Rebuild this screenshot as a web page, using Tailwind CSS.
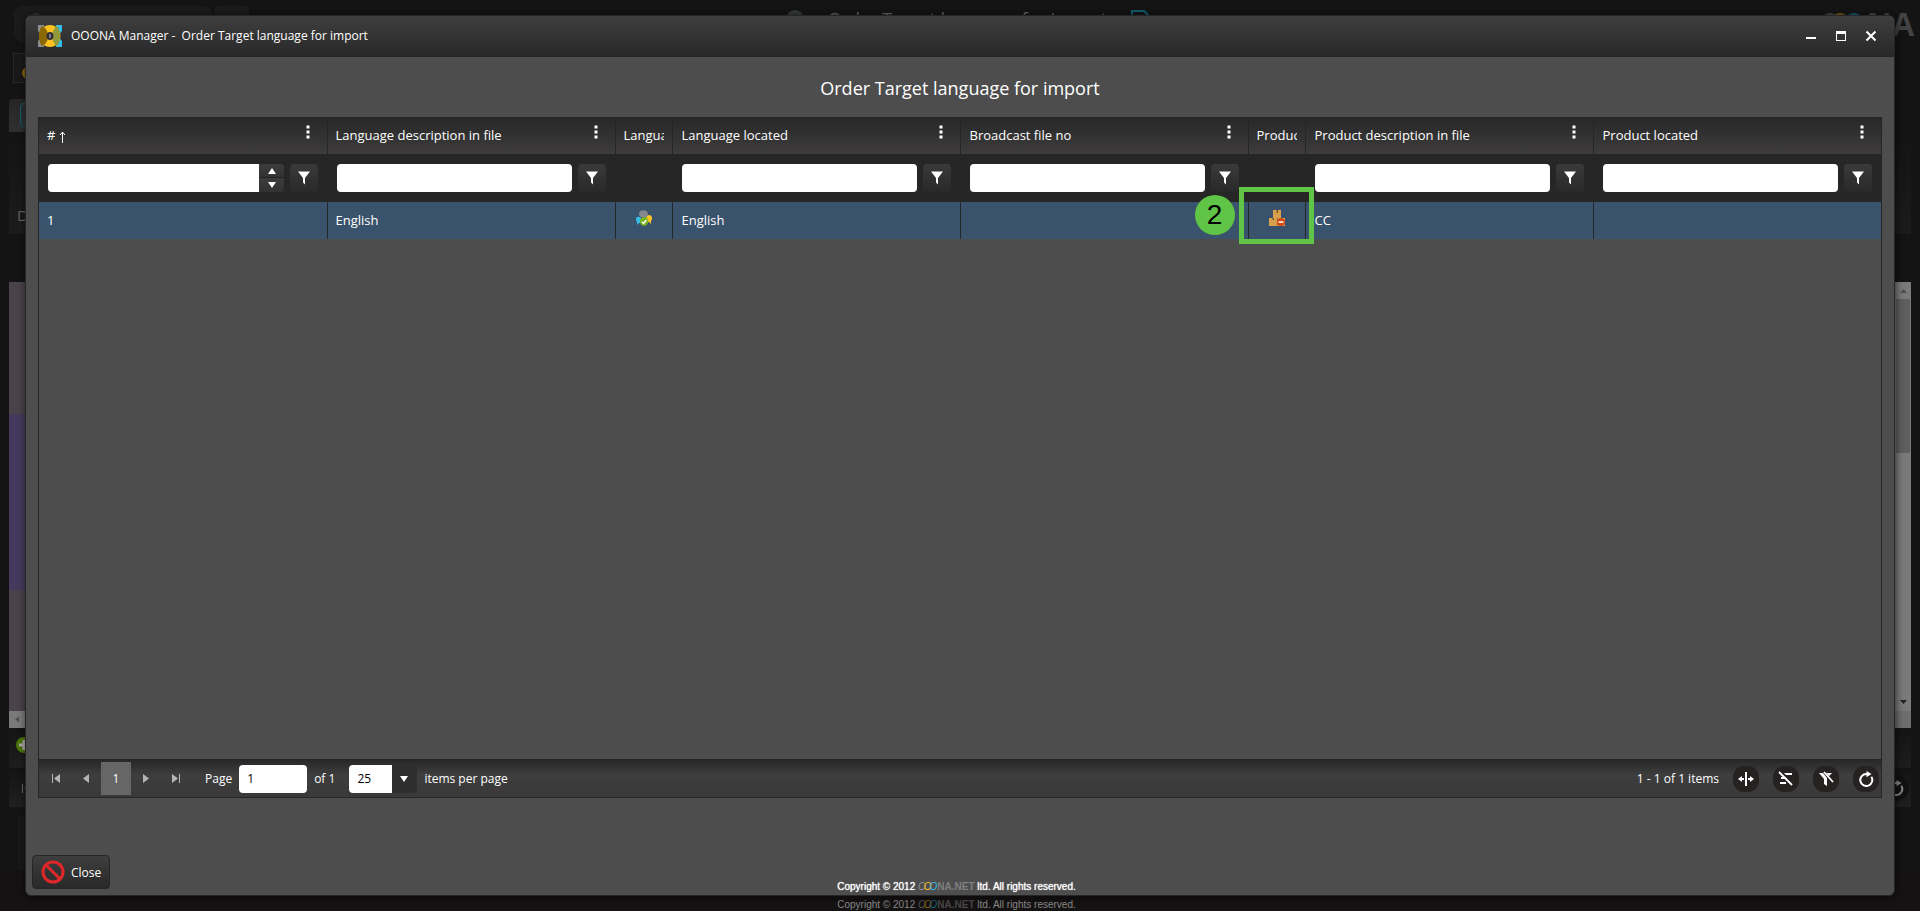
<!DOCTYPE html>
<html lang="en">
<head>
<meta charset="utf-8">
<title>OOONA Manager</title>
<script src="https://cdn.jsdelivr.net/npm/@tailwindcss/browser@4"></script>
</head>
<body class="relative h-screen overflow-hidden bg-[#141414] font-['Open_Sans','Noto_Sans',sans-serif] text-[13px] text-white">

<svg class="hidden" aria-hidden="true">
  <symbol id="funnel" viewBox="0 0 12 14"><path fill="currentColor" d="M0 0.500h12L7 7v6.500L5 11.500V7z"/></symbol>
  <symbol id="dots" viewBox="0 0 4 14"><path fill="currentColor" d="M0.500 0.500h3v3h-3zM0.500 5.500h3v3h-3zM0.500 10.500h3v3h-3z"/></symbol>
  <symbol id="first" viewBox="0 0 8 9"><path fill="currentColor" d="M0 0h1v9H0zM8 0v9L2 4.500z"/></symbol>
  <symbol id="prev" viewBox="0 0 6 9"><path fill="currentColor" d="M6 0v9L0 4.500z"/></symbol>
  <symbol id="refresh" viewBox="0 0 16 16"><path fill="none" stroke="currentColor" stroke-width="2" d="M10 3H8.500a6 6 0 1 0 4.800 2.700"/><path fill="currentColor" d="M8.500 0l5 3-5 3.300z"/></symbol>
</svg>

<!-- Dimmed page behind the window -->
<div class="flex h-full flex-col" aria-hidden="true">
  <div class="flex h-[53px] items-start justify-between pt-[6px] pr-[5px] pl-[14px]">
    <div class="flex w-[264px] gap-[2px]">
      <div class="h-9 w-[198px] rounded-lg bg-[#1b1b1b] pt-[7px] pl-4"><div class="size-3 rounded-full border-2 border-[#333]"></div></div>
      <div class="h-9 w-[35px] rounded-sm bg-[#1b1b1b]"></div>
    </div>
    <div class="flex items-start gap-6 text-[#666]">
      <div class="mt-1 size-[18px] rounded-full bg-[#333838]"></div>
      <div class="text-lg leading-[26px]">Order Target language for import</div>
      <svg class="mt-1 h-5 w-5" viewBox="0 0 20 20" fill="none" stroke="#12596a" stroke-width="2"><path d="M1 19V1h12l6 6v12z"/><path stroke="#4a3c10" d="M5 6h6"/></svg>
    </div>
    <div class="flex w-[256px] justify-end gap-[2px] pt-[3px] font-['Liberation_Sans',sans-serif] text-[33px] leading-8 font-bold text-[#434343]">
      <svg class="mt-1 h-6 w-[46px]" viewBox="0 0 46 24" fill="none" stroke-width="5"><ellipse cx="11" cy="12" rx="8" ry="9.500" stroke="#434343"/><ellipse cx="21" cy="12" rx="8" ry="9.500" stroke="#6f5714"/><ellipse cx="35" cy="12" rx="8" ry="9.500" stroke="#12596a"/></svg>
      <span>NA</span>
    </div>
  </div>
  <div class="flex h-[46px] pl-[13px]">
    <div class="h-[30px] w-20 border border-[#262626] bg-[#191919] pt-[13px] pl-2"><div class="size-3 rounded-full bg-[#86650b]"></div></div>
  </div>
  <div class="ml-[9px] h-[33px] w-24 rounded-t-sm bg-linear-to-b from-[#262626] to-[#303030] pt-1 pl-[11px]"><div class="h-6 w-8 rounded-sm border border-[#12596a] bg-[#2a3033]"></div></div>
  <div class="mx-[9px] h-[102px] bg-linear-to-b from-[#151314] to-[#1c1c1c] pt-[72px] pl-2 text-[15px] text-[#666]">D</div>
  <div class="h-12"></div>
  <div class="mx-[9px] flex h-[446px]">
    <div class="flex w-8 flex-col">
      <div class="h-[132px] bg-[#4a4349]"></div>
      <div class="h-[176px] bg-[#453a5e]"></div>
      <div class="grow bg-[#4a4349]"></div>
      <div class="flex h-[17px] items-center bg-[#7a7a7a] pl-[6px] text-[#4d4d4d]"><svg class="h-[7px] w-1"><use href="#prev"/></svg></div>
    </div>
    <div class="grow"></div>
    <div class="flex w-4 flex-col items-center bg-[#7a7a7a]">
      <div class="flex h-[17px] w-full items-center justify-center"><svg class="h-1 w-[7px]" viewBox="0 0 7 4"><path fill="#4d4d4d" d="M0 4L3.500 0 7 4z"/></svg></div>
      <div class="h-[154px] w-[14px] bg-[#5f5f5f]"></div>
      <div class="flex grow items-end pb-[7px]"><svg class="h-1 w-[7px]" viewBox="0 0 7 4"><path fill="#222" d="M0 0h7L3.500 4z"/></svg></div>
      <div class="h-[17px] w-full bg-[#6e6e6e]"></div>
    </div>
  </div>
  <div class="mx-[9px] h-10 bg-linear-to-b from-[#141414] to-[#1e1e1e] pt-[9px] pl-[7px]">
    <svg class="size-4" viewBox="0 0 16 16"><circle cx="8" cy="8" r="8" fill="#4c7407"/><path stroke="#aaa" stroke-width="3" d="M3 8h10M8 3v10"/></svg>
  </div>
  <div class="mx-[9px] mt-px flex h-[38px] items-center justify-between bg-linear-to-b from-[#141414] to-[#202020] pr-[2px] pl-[13px] text-[#666]">
    <svg class="h-[9px] w-2"><use href="#first"/></svg>
    <span class="flex size-[26px] items-center justify-center rounded-full bg-[#131111] text-[#888]"><svg class="size-4"><use href="#refresh"/></svg></span>
  </div>
  <div class="mt-[10px] ml-[18px] h-[52px] w-24 border border-[#1c1c1c] bg-[#171717]"></div>
  <div class="flex grow items-end justify-center bg-[#151213] pr-[7px] font-['Liberation_Sans',sans-serif] text-[10px] leading-3 text-[#8a8a8a]"><span class="whitespace-pre">Copyright © 2012 <i class="text-[#555]">O</i><i class="-ml-[2px] text-[#86650b]">O</i><i class="-ml-[2px] text-[#17667a]">O</i><b class="text-[#484848]">NA.NET</b> ltd. All rights reserved.</span></div>
</div>

<!-- Window -->
<div role="dialog" aria-labelledby="window-title" class="absolute inset-x-[25px] top-[15px] bottom-[15px] flex flex-col rounded-md border border-[#262626] bg-[#4d4d4d] shadow-[1px_1px_7px_1px_rgba(0,0,0,0.5)]">
  <header class="flex h-[41px] shrink-0 items-center justify-between rounded-t-md border-b border-[#262626] bg-linear-to-b from-[#3e3e3e] to-[#292929] pr-2 pl-3">
    <div class="flex items-center gap-[9px]">
      <svg class="h-[22px] w-6" viewBox="0 0 24 22">
        <path fill="#8d8d92" d="M0 0h6v22H0v-6c3-2 3-8 0-10z"/>
        <path fill="#35bde5" d="M24 0h-6v22h6v-6c-3-2-3-8 0-10z"/>
        <ellipse cx="12" cy="11" rx="10.500" ry="11" fill="#fcc222"/>
        <path fill="#8b6905" d="M4 1c8 3 8 17 0 20C0 17 0 5 4 1z"/>
        <path fill="#929a3e" d="M19 1c-6 3-6 17 0 20 4-4 4-16 0-20z"/>
        <ellipse cx="12" cy="11" rx="3.500" ry="4" fill="#2f3037"/><path fill="#777a85" d="M11 9h2v4h-2z"/>
      </svg>
      <h1 id="window-title" class="whitespace-pre text-xs">OOONA Manager -  Order Target language for import</h1>
    </div>
    <div class="flex">
      <button aria-label="Minimize" class="flex size-[30px] items-center justify-center"><svg class="size-3" viewBox="0 0 12 12"><path fill="#fff" d="M1 7h10v2H1z"/></svg></button>
      <button aria-label="Maximize" class="flex size-[30px] items-center justify-center"><svg class="size-3" viewBox="0 0 12 12"><path fill="#fff" fill-rule="evenodd" d="M1 1h10v10H1zM2 4v6h8V4z"/></svg></button>
      <button aria-label="Close window" class="flex size-[30px] items-center justify-center"><svg class="size-3" viewBox="0 0 12 12"><path stroke="#fff" stroke-width="2" d="M1.500 1.500l9 9M10.500 1.500l-9 9"/></svg></button>
    </div>
  </header>

  <main class="flex min-h-0 grow flex-col px-3">
    <h2 class="flex h-[60px] shrink-0 items-center justify-center pt-px text-lg">Order Target language for import</h2>

    <div class="flex h-[681px] flex-col border border-[#262626]">
      <table class="w-full table-fixed border-collapse">
        <colgroup><col><col><col class="w-[57px]"><col><col><col class="w-[57px]"><col><col></colgroup>
        <thead class="text-left">
          <tr class="h-[36px] bg-linear-to-b from-[#282828] to-[#3e3c3c]">
            <th scope="col" class="px-2 font-normal"><div class="flex items-center justify-between pr-[9px]"><span class="flex items-center gap-1"># <svg class="mt-px h-3 w-[7px]" viewBox="0 0 7 12"><path fill="none" stroke="#fff" d="M3.500 12V1M1 4l2.500-3L6 4"/></svg></span><button aria-label="Column menu" class="pb-2"><svg class="h-[14px] w-1"><use href="#dots"/></svg></button></div></th>
            <th scope="col" class="border-l border-[#262626] px-2 font-normal"><div class="flex items-center justify-between pr-[9px]">Language description in file<button aria-label="Column menu" class="pb-2"><svg class="h-[14px] w-1"><use href="#dots"/></svg></button></div></th>
            <th scope="col" class="border-l border-[#262626] px-2 font-normal"><div class="overflow-hidden whitespace-nowrap">Language</div></th>
            <th scope="col" class="border-l border-[#262626] px-[9px] font-normal"><div class="flex items-center justify-between pr-2">Language located<button aria-label="Column menu" class="pb-2"><svg class="h-[14px] w-1"><use href="#dots"/></svg></button></div></th>
            <th scope="col" class="border-l border-[#262626] px-[9px] font-normal"><div class="flex items-center justify-between pr-2">Broadcast file no<button aria-label="Column menu" class="pb-2"><svg class="h-[14px] w-1"><use href="#dots"/></svg></button></div></th>
            <th scope="col" class="border-l border-[#262626] px-2 font-normal"><div class="overflow-hidden whitespace-nowrap">Product</div></th>
            <th scope="col" class="border-l border-[#262626] px-[9px] font-normal"><div class="flex items-center justify-between pr-2">Product description in file<button aria-label="Column menu" class="pb-2"><svg class="h-[14px] w-1"><use href="#dots"/></svg></button></div></th>
            <th scope="col" class="border-l border-[#262626] px-[9px] font-normal"><div class="flex items-center justify-between pr-2">Product located<button aria-label="Column menu" class="pb-2"><svg class="h-[14px] w-1"><use href="#dots"/></svg></button></div></th>
          </tr>
          <tr class="h-12 bg-[#262626]">
            <td class="px-[9px]"><div class="flex gap-[6px]"><div class="flex min-w-0 grow"><input aria-label="Filter #" class="h-7 min-w-0 grow rounded-l-sm bg-white px-2 text-black"><span class="flex w-[25px] flex-col"><button aria-label="Increase" class="flex h-[14px] items-center justify-center rounded-tr-sm border-b border-[#222] bg-linear-to-b from-[#3c3c3c] to-[#323232]"><svg class="h-[6px] w-2" viewBox="0 0 8 6"><path fill="#fff" d="M0 6l4-6 4 6z"/></svg></button><button aria-label="Decrease" class="flex h-[14px] items-center justify-center rounded-br-sm bg-linear-to-b from-[#3c3c3c] to-[#323232]"><svg class="h-[6px] w-2" viewBox="0 0 8 6"><path fill="#fff" d="M0 0h8L4 6z"/></svg></button></span></div><button aria-label="Filter" class="flex size-7 items-center justify-center rounded-sm bg-linear-to-b from-[#3a3a3a] to-[#292929]"><svg class="h-[14px] w-3"><use href="#funnel"/></svg></button></div></td>
            <td class="pr-[9px] pl-[10px]"><div class="flex gap-[6px]"><input aria-label="Filter language description" class="h-7 min-w-0 grow rounded-sm bg-white px-2 text-black"><button aria-label="Filter" class="flex size-7 shrink-0 items-center justify-center rounded-sm bg-linear-to-b from-[#3a3a3a] to-[#292929]"><svg class="h-[14px] w-3"><use href="#funnel"/></svg></button></div></td>
            <td></td>
            <td class="pr-[9px] pl-[10px]"><div class="flex gap-[6px]"><input aria-label="Filter language located" class="h-7 min-w-0 grow rounded-sm bg-white px-2 text-black"><button aria-label="Filter" class="flex size-7 shrink-0 items-center justify-center rounded-sm bg-linear-to-b from-[#3a3a3a] to-[#292929]"><svg class="h-[14px] w-3"><use href="#funnel"/></svg></button></div></td>
            <td class="pr-[9px] pl-[10px]"><div class="flex gap-[6px]"><input aria-label="Filter broadcast file no" class="h-7 min-w-0 grow rounded-sm bg-white px-2 text-black"><button aria-label="Filter" class="flex size-7 shrink-0 items-center justify-center rounded-sm bg-linear-to-b from-[#3a3a3a] to-[#292929]"><svg class="h-[14px] w-3"><use href="#funnel"/></svg></button></div></td>
            <td></td>
            <td class="pr-[9px] pl-[10px]"><div class="flex gap-[6px]"><input aria-label="Filter product description" class="h-7 min-w-0 grow rounded-sm bg-white px-2 text-black"><button aria-label="Filter" class="flex size-7 shrink-0 items-center justify-center rounded-sm bg-linear-to-b from-[#3a3a3a] to-[#292929]"><svg class="h-[14px] w-3"><use href="#funnel"/></svg></button></div></td>
            <td class="pr-[9px] pl-[10px]"><div class="flex gap-[6px]"><input aria-label="Filter product located" class="h-7 min-w-0 grow rounded-sm bg-white px-2 text-black"><button aria-label="Filter" class="flex size-7 shrink-0 items-center justify-center rounded-sm bg-linear-to-b from-[#3a3a3a] to-[#292929]"><svg class="h-[14px] w-3"><use href="#funnel"/></svg></button></div></td>
          </tr>
        </thead>
        <tbody>
          <tr class="h-[37px] bg-[#3a536c]">
            <td class="px-2 pt-px">1</td>
            <td class="border-l border-[#262626] px-2 pt-px">English</td>
            <td class="border-l border-[#262626]">
              <button aria-label="Assign language" class="mx-auto block pb-[6px]"><svg class="size-4" viewBox="0 0 16 16"><path fill="#35bde5" d="M0 9c0-3 5-3 5 0v4H3l-2 2v-3c-1-1-1-2-1-3z"/><path fill="#fcc222" d="M16 8c0-4-6-4-6 0v4h3l2 2v-3c1-1 1-2 1-3z"/><ellipse cx="7.500" cy="4" rx="4.500" ry="3.800" fill="#85898d"/><circle cx="8" cy="11.500" r="4.200" fill="#76b41c"/><path fill="none" stroke="#fff" stroke-width="1.500" d="M6 12l1.500 1.500L10.300 10"/></svg></button>
            </td>
            <td class="border-l border-[#262626] px-[9px] pt-px">English</td>
            <td class="border-l border-[#262626]"></td>
            <td class="relative border-l border-[#262626]">
              <button aria-label="Assign product" class="mx-auto block pb-[6px]"><svg class="size-4" viewBox="0 0 16 16"><path fill="#d8a04d" d="M4 0h8v8H4zM0 8h8v8H0zM8.500 8H16v8H8.500z"/><path fill="#7d5422" d="M7.500 0h1.500v3H7.500zM3.500 8H5v2H3.500z"/><path fill="#a97937" d="M7.800 8h.7v8h-.7z"/><circle cx="12" cy="12" r="4" fill="#d9460d"/><path fill="#fff" d="M9.500 11.300h5v1.600h-5z"/></svg></button>
              <div class="pointer-events-none absolute -top-[15px] -right-[9px] -bottom-[5px] -left-[10px] border-[5px] border-[#60c446]"></div>
              <div class="pointer-events-none absolute -top-[7px] right-full mr-[14px] flex size-10 items-center justify-center rounded-full bg-[#60c446] font-['Liberation_Sans',sans-serif] text-[28px] leading-none text-black">2</div>
            </td>
            <td class="border-l border-[#262626] px-[9px] pt-px">CC</td>
            <td class="border-l border-[#262626]"></td>
          </tr>
        </tbody>
      </table>
      <div class="grow"></div>
      <nav aria-label="Pages" class="flex h-[38px] shrink-0 items-center justify-between border-t border-[#262626] bg-linear-to-b from-[#282828] via-[#3e3e3e] via-40% to-[#3a3838] pr-[2px] pl-[2px] text-xs">
        <div class="flex items-center">
          <button aria-label="First page" class="flex h-8 w-[30px] items-center justify-center text-[#b5b5b5]"><svg class="h-[9px] w-2"><use href="#first"/></svg></button>
          <button aria-label="Previous page" class="flex h-8 w-[30px] items-center justify-center text-[#b5b5b5]"><svg class="h-[9px] w-[6px]"><use href="#prev"/></svg></button>
          <button aria-current="page" class="h-[33px] w-[30px] bg-[#666]">1</button>
          <button aria-label="Next page" class="flex h-8 w-[30px] items-center justify-center text-[#b5b5b5]"><svg class="h-[9px] w-[6px] rotate-180"><use href="#prev"/></svg></button>
          <button aria-label="Last page" class="flex h-8 w-[30px] items-center justify-center text-[#b5b5b5]"><svg class="h-[9px] w-2 rotate-180"><use href="#first"/></svg></button>
          <label class="ml-[14px] flex items-center gap-[7px]">Page <input value="1" class="h-7 w-[68px] rounded-sm bg-white px-2 text-black"></label>
          <span class="ml-[7px]">of 1</span>
          <label class="ml-[14px] flex items-center gap-[7px]"><span class="relative flex items-center"><select class="h-7 w-[68px] appearance-none rounded-sm bg-linear-to-r from-white from-[43px] to-[#2e2e2e] to-[43px] px-2 text-black"><option>25</option></select><svg class="pointer-events-none absolute right-[9px] h-[6px] w-2" viewBox="0 0 8 6"><path fill="#fff" d="M0 0h8L4 6z"/></svg></span>items per page</label>
        </div>
        <div class="flex items-center gap-[14px]">
          <span>1 - 1 of 1 items</span>
          <button aria-label="Fit columns" class="flex size-[26px] items-center justify-center rounded-[11px] bg-[#262222]"><svg class="size-4" viewBox="0 0 16 16" fill="#fff"><path d="M7 1h2v14H7zM0 8l4-3v2h2v2H4v2zM16 8l-4-3v2h-2v2h2v2z"/></svg></button>
          <button aria-label="Clear sorting" class="flex size-[26px] items-center justify-center rounded-[11px] bg-[#262222]"><svg class="size-4" viewBox="0 0 16 16"><path fill="#fff" d="M6 2h8v2H8zM3 6h4l2 2H3zM2 11h6v2H2z"/><path stroke="#fff" stroke-width="1.800" d="M1 1l13 13"/></svg></button>
          <button aria-label="Clear filters" class="flex size-[26px] items-center justify-center rounded-[11px] bg-[#262222]"><svg class="size-4" viewBox="0 0 16 16"><path fill="#fff" d="M1 2h4l4 5v8l-3-2V8zM8 2h6l-3 3z"/><path stroke="#fff" stroke-width="1.800" d="M6 1l9 10"/></svg></button>
          <button aria-label="Refresh" class="flex size-[26px] items-center justify-center rounded-[11px] bg-[#262222]"><svg class="size-4"><use href="#refresh"/></svg></button>
        </div>
      </nav>
    </div>
  </main>

  <footer class="relative flex shrink-0 items-end px-[6px] pb-[6px]">
    <button class="flex h-[34px] items-center gap-[6px] rounded-sm border border-[#262626] bg-linear-to-b from-[#3e3e3e] to-[#292929] px-2 text-xs"><svg class="size-6" viewBox="0 0 24 24" fill="none" stroke="#e0282b" stroke-width="3"><circle cx="12" cy="12" r="10"/><path d="M5 5l14 14"/></svg><span class="pt-px">Close</span></button>
    <p class="pointer-events-none absolute inset-x-0 bottom-[2px] pr-[7px] text-center font-['Liberation_Sans',sans-serif] text-[10px] leading-3 whitespace-pre text-shadow-[0_0_1px_#fff]">Copyright © 2012 <i class="text-[#8d8d92] text-shadow-none">O</i><i class="-ml-[2px] text-[#fcc222] text-shadow-none">O</i><i class="-ml-[2px] text-[#35bde5] text-shadow-none">O</i><b class="text-[#808080] text-shadow-none">NA.NET</b> ltd. All rights reserved.</p>
  </footer>
</div>
</body>
</html>
